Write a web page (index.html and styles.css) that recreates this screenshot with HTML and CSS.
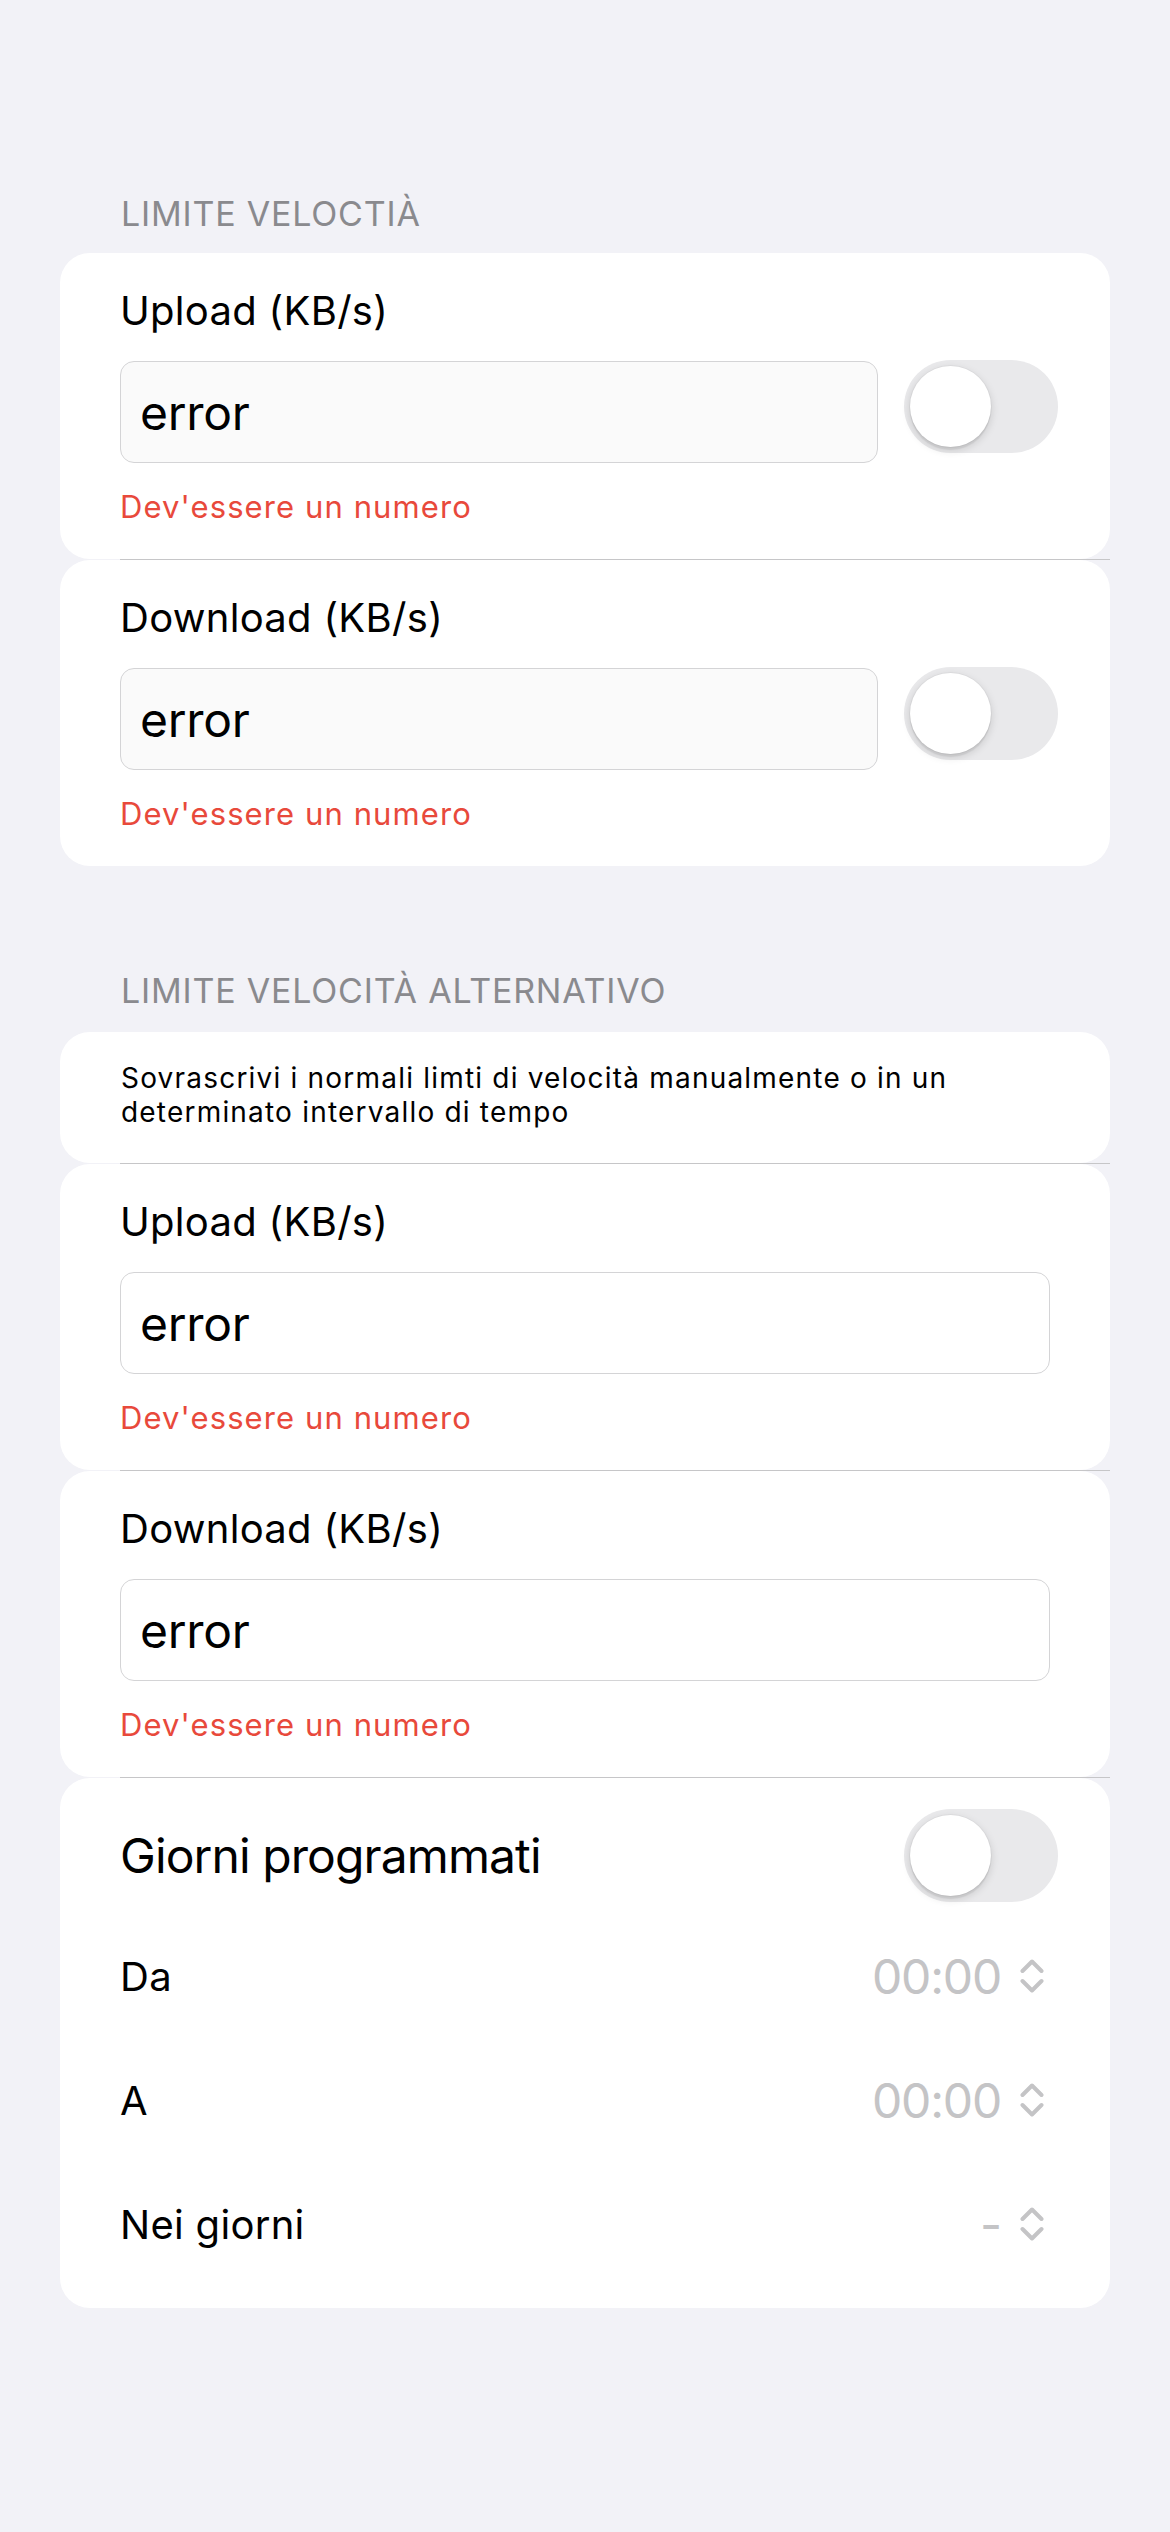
FILE: index.html
```html
<!DOCTYPE html>
<html lang="it">
<head>
<meta charset="utf-8">
<title>Limite velocità</title>
<link rel="stylesheet" href="styles.css">
</head>
<body>
<div class="page">
  <div class="section-header">LIMITE VELOCTIÀ</div>

  <div class="card field">
    <div class="label">Upload (KB/s)</div>
    <div class="input-row">
      <div class="input grey">error</div>
      <div class="switch"><div class="knob"></div></div>
    </div>
    <div class="error">Dev'essere un numero</div>
  </div>
  <div class="sep"></div>
  <div class="card field">
    <div class="label">Download (KB/s)</div>
    <div class="input-row">
      <div class="input grey">error</div>
      <div class="switch"><div class="knob"></div></div>
    </div>
    <div class="error">Dev'essere un numero</div>
  </div>

  <div class="section-header second">LIMITE VELOCITÀ ALTERNATIVO</div>

  <div class="card desc">Sovrascrivi i normali limti di velocità manualmente o in un determinato intervallo di tempo</div>
  <div class="sep"></div>
  <div class="card field">
    <div class="label">Upload (KB/s)</div>
    <div class="input-row">
      <div class="input">error</div>
    </div>
    <div class="error">Dev'essere un numero</div>
  </div>
  <div class="sep"></div>
  <div class="card field">
    <div class="label">Download (KB/s)</div>
    <div class="input-row">
      <div class="input">error</div>
    </div>
    <div class="error">Dev'essere un numero</div>
  </div>
  <div class="sep"></div>
  <div class="card schedule">
    <div class="row first">
      <div class="big-label">Giorni programmati</div>
      <div class="switch"><div class="knob"></div></div>
    </div>
    <div class="row">
      <div class="row-label">Da</div>
      <div class="value"><span class="value-text">00:00</span><svg class="updown" width="24" height="36" viewBox="0 0 24 36"><path d="M2.5 13 L12 3.5 L21.5 13 M2.5 23 L12 32.5 L21.5 23"/></svg></div>
    </div>
    <div class="row">
      <div class="row-label">A</div>
      <div class="value"><span class="value-text">00:00</span><svg class="updown" width="24" height="36" viewBox="0 0 24 36"><path d="M2.5 13 L12 3.5 L21.5 13 M2.5 23 L12 32.5 L21.5 23"/></svg></div>
    </div>
    <div class="row">
      <div class="row-label">Nei giorni</div>
      <div class="value"><span class="value-text">-</span><svg class="updown" width="24" height="36" viewBox="0 0 24 36"><path d="M2.5 13 L12 3.5 L21.5 13 M2.5 23 L12 32.5 L21.5 23"/></svg></div>
    </div>
  </div>
</div>
</body>
</html>
```

FILE: styles.css
```css
html, body {
  margin: 0;
  padding: 0;
  background: #f2f2f7;
}

body {
  font-family: Inter, "Liberation Sans", sans-serif;
  color: #000;
  min-height: 2532px;
}

.page {
  padding: 194px 60px 0;
  display: flex;
  flex-direction: column;
}

.section-header {
  font-size: 34px;
  line-height: 40px;
  letter-spacing: 0.8px;
  color: #8a8a8e;
  padding-left: 61px;
  margin-bottom: 19px;
}

.section-header.second {
  margin-top: 105px;
  margin-bottom: 21px;
}

.card {
  background: #fff;
  border-radius: 30px;
}

.sep {
  height: 1px;
  margin-left: 60px;
  background: #c6c6c8;
}

.field {
  padding: 34px 60px 33px;
  display: flex;
  flex-direction: column;
}

.label {
  font-size: 40px;
  line-height: 48px;
  letter-spacing: 0.3px;
}

.input-row {
  margin-top: 26px;
  display: flex;
  align-items: flex-start;
  gap: 26px;
}

.input {
  flex: 1;
  box-sizing: border-box;
  height: 102px;
  border: 1.5px solid #d4d4d6;
  border-radius: 14px;
  background: #fff;
  padding-left: 19px;
  display: flex;
  align-items: center;
  font-size: 48px;
  letter-spacing: -0.3px;
}

.input.grey {
  background: #fafafa;
}

.switch {
  position: relative;
  flex: none;
  width: 154px;
  height: 93px;
  border-radius: 47px;
  background: #e9e9eb;
  margin-top: -1px;
  margin-right: -8px;
}

.knob {
  position: absolute;
  left: 6px;
  top: 6px;
  width: 81px;
  height: 81px;
  border-radius: 50%;
  background: #fff;
  box-shadow: 0 3px 8px rgba(0, 0, 0, 0.15), 0 3px 1px rgba(0, 0, 0, 0.06), 0 0 0 1px rgba(0, 0, 0, 0.03);
}

.error {
  margin-top: 25px;
  font-size: 31px;
  line-height: 38px;
  letter-spacing: 1.1px;
  color: #e8493b;
}

.desc {
  padding: 29px 60px 34px 61px;
  font-size: 28px;
  line-height: 34px;
  letter-spacing: 1.2px;
}

.schedule {
  padding: 19px 60px 22px;
  display: flex;
  flex-direction: column;
}

.row {
  height: 124px;
  display: flex;
  align-items: center;
  justify-content: space-between;
}

.row.first {
  height: 117px;
}

.row.first .switch {
  margin-top: 0;
}

.big-label {
  font-size: 48px;
  letter-spacing: -0.9px;
}

.row-label {
  font-size: 40px;
  letter-spacing: 0.3px;
}

.value {
  display: flex;
  align-items: center;
  gap: 19px;
  margin-right: 6px;
  color: #c4c4c6;
}

.value-text {
  font-size: 48px;
  letter-spacing: -1.2px;
}

.updown {
  display: block;
  fill: none;
  stroke: #c4c4c6;
  stroke-width: 4;
  stroke-linecap: round;
  stroke-linejoin: round;
}
```
